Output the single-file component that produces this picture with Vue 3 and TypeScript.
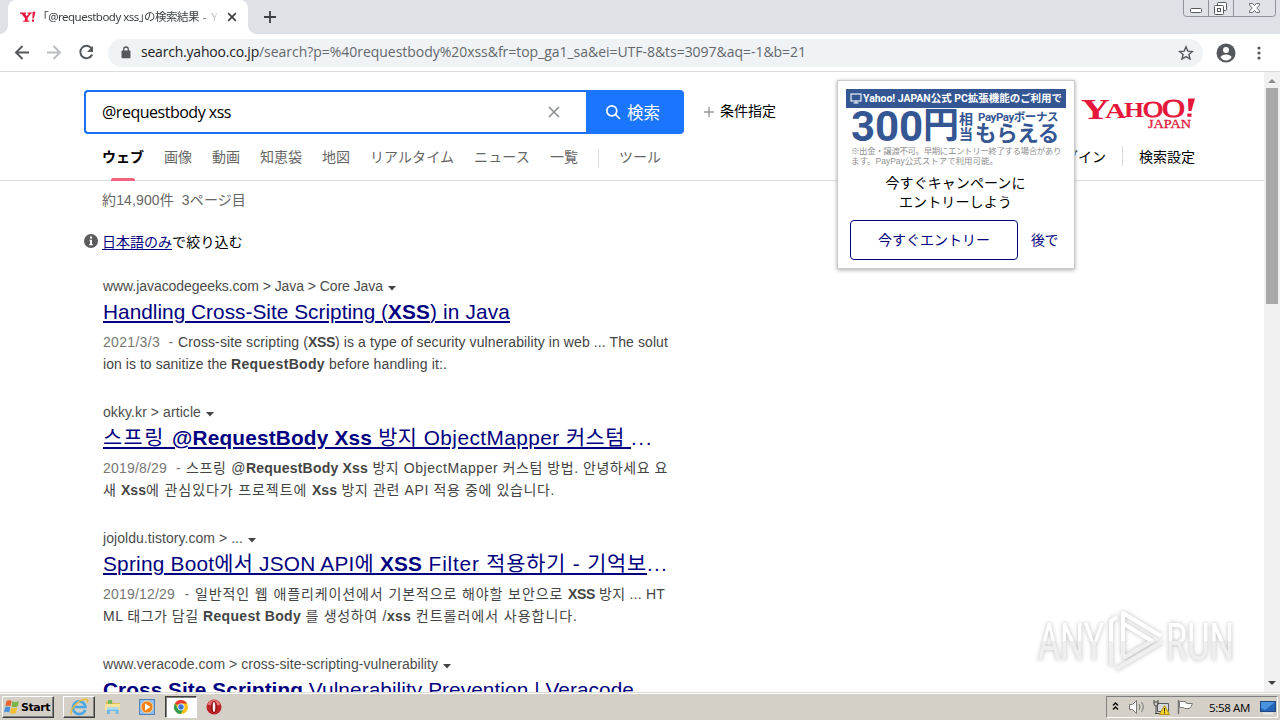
<script setup lang="ts">
import type { Directive } from 'vue'

interface Run { t: string; w: number; b?: boolean; g?: boolean }
interface Result { url: Run; title: Run[]; tail?: Run; lines: Run[][] }

// Spreads letter spacing so that a run takes exactly its designed width.
const vFit: Directive<HTMLElement, number> = {
  mounted(el, binding) {
    const count = Array.from(el.textContent ?? '').length
    const width = el.getBoundingClientRect().width
    if (count > 0) el.style.letterSpacing = `${(binding.value - width) / count}px`
  },
}

const tabs: Run[] = [
  { t: 'ウェブ', w: 42, b: true },
  { t: '画像', w: 28 },
  { t: '動画', w: 28 },
  { t: '知恵袋', w: 42 },
  { t: '地図', w: 28 },
  { t: 'リアルタイム', w: 84 },
  { t: 'ニュース', w: 56 },
  { t: '一覧', w: 28 },
]

const results: Result[] = [
  {
    url: { t: 'www.javacodegeeks.com > Java > Core Java', w: 280 },
    title: [
      { t: 'Handling Cross-Site Scripting (', w: 285 },
      { t: 'XSS', w: 42, b: true },
      { t: ') in Java', w: 80 },
    ],
    lines: [
      [
        { t: '2021/3/3', w: 57, g: true },
        { t: '  - ', w: 18, g: true },
        { t: 'Cross-site scripting (', w: 130 },
        { t: 'XSS', w: 27, b: true },
        { t: ') is a type of security vulnerability in web ... The solut', w: 333 },
      ],
      [
        { t: 'ion is to sanitize the ', w: 128 },
        { t: 'RequestBody', w: 94, b: true },
        { t: ' before handling it:.', w: 122 },
      ],
    ],
  },
  {
    url: { t: 'okky.kr > article', w: 98 },
    title: [
      { t: '스프링 ', w: 69 },
      { t: '@RequestBody Xss', w: 200, b: true },
      { t: ' 방지 ObjectMapper 커스텀 ', w: 259 },
    ],
    tail: { t: '...', w: 22 },
    lines: [
      [
        { t: '2019/8/29', w: 64, g: true },
        { t: '  - ', w: 19, g: true },
        { t: '스프링 @', w: 60 },
        { t: 'RequestBody Xss', w: 122, b: true },
        { t: ' 방지 ObjectMapper 커스텀 방법. 안녕하세요 요', w: 300 },
      ],
      [
        { t: '새 ', w: 18 },
        { t: 'Xss', w: 25, b: true },
        { t: '에 관심있다가 프로젝트에 ', w: 166 },
        { t: 'Xss', w: 25, b: true },
        { t: ' 방지 관련 API 적용 중에 있습니다.', w: 218 },
      ],
    ],
  },
  {
    url: { t: 'jojoldu.tistory.com > ...', w: 140 },
    title: [
      { t: 'Spring Boot에서 JSON API에 ', w: 277 },
      { t: 'XSS', w: 42, b: true },
      { t: ' Filter 적용하기 - 기억보', w: 225 },
    ],
    tail: { t: '...', w: 21 },
    lines: [
      [
        { t: '2019/12/29', w: 72, g: true },
        { t: '  - ', w: 20, g: true },
        { t: '일반적인 웹 애플리케이션에서 기본적으로 해야할 보안으로 ', w: 373 },
        { t: 'XSS', w: 27, b: true },
        { t: ' 방지 ... HT', w: 70 },
      ],
      [
        { t: 'ML 태그가 담길 ', w: 100 },
        { t: 'Request Body', w: 98, b: true },
        { t: ' 를 생성하여 /', w: 86 },
        { t: 'xss', w: 24, b: true },
        { t: ' 컨트롤러에서 사용합니다.', w: 167 },
      ],
    ],
  },
  {
    url: { t: 'www.veracode.com > cross-site-scripting-vulnerability', w: 335 },
    title: [
      { t: 'Cross Site Scripting', w: 200, b: true },
      { t: ' Vulnerability Prevention | Veracode', w: 331 },
    ],
    lines: [],
  },
]
</script>

<template>
  <div class="screen">
    <div class="tabstrip">
      <div class="tab">
        <svg class="fav" width="16" height="12" viewBox="0 0 16 12">
          <path d="M0 1.5h6v1.2H5l1.8 2.6 2-2.6H7.6V1.5h4.2v1.2h-1L7.6 7v2.5h1.6v1.2H3.3V9.5H5V7.2L1.4 2.7H0z" fill="#e5173f" />
          <path d="M12.6.8h2.9l-1.7 6.6h-1.4zM12 8.6h2v2.1h-2z" fill="#e5173f" />
        </svg>
        <div class="tabtitle"><span v-fit="156">「@requestbody xss」の検索結果</span><span v-fit="19"> - Y</span><span>a</span></div>
        <svg class="tabx" width="10" height="10" viewBox="0 0 10 10"><path d="M1.2 1.2l7.6 7.6M8.8 1.2L1.2 8.8" stroke="#3c4043" stroke-width="1.7" /></svg>
      </div>
      <svg class="newtab" width="12" height="12" viewBox="0 0 12 12"><path d="M6 0v12M0 6h12" stroke="#3c4043" stroke-width="1.8" /></svg>
      <svg class="winctl" width="96" height="18" viewBox="0 0 96 18" fill="none">
        <path d="M1.5 0v13.5q0 3 3 3h86q3 0 3-3V0" stroke="#8f949b" />
        <path d="M26.5 0v16M51.5 0v16" stroke="#8f949b" />
        <rect x="8.5" y="8.5" width="11" height="4" rx="1" stroke="#55595f" fill="#fff" />
        <rect x="35.500" y="2.500" width="9" height="8" rx="1" stroke="#55595f" fill="#fff" />
        <rect x="32.500" y="5.500" width="9" height="9" rx="1" stroke="#55595f" fill="#fff" />
        <rect x="35.500" y="8.500" width="3" height="3" stroke="#55595f" />
        <path d="M67.500 3.500h3.200l1.800 2 1.800-2h3.200v1.500l-2.700 3 2.700 3v1.500h-3.200l-1.800-2-1.800 2h-3.200V11l2.700-3-2.700-3z" stroke="#6a6e74" fill="#fff" />
      </svg>
    </div>

    <div class="toolbar">
      <svg class="nav" width="100" height="36" viewBox="0 0 100 36" fill="none" stroke-width="1.900">
        <path d="M21 17.500H8M14.500 11L8 17.500l6.500 6.500" stroke="#54585c" />
        <path d="M39 17.500h13M45.500 11l6.500 6.500-6.500 6.500" stroke="#b9bbbe" />
        <path d="M83.600 13.400A6.200 6.200 0 1 0 84.200 19.500" stroke="#54585c" />
        <path d="M85 11v6h-6z" fill="#54585c" />
      </svg>
      <div class="omnibox">
        <svg class="lock" width="10" height="13" viewBox="0 0 10 13"><rect x="0.500" y="4.500" width="9" height="7.800" rx="1" fill="#54585c" /><path d="M2.700 5V3.300a2.300 2.300 0 0 1 4.600 0V5" fill="none" stroke="#54585c" stroke-width="1.300" /></svg>
        <div class="address"><span v-fit="118" class="host">search.yahoo.co.jp</span><span v-fit="547">/search?p=%40requestbody%20xss&amp;fr=top_ga1_sa&amp;ei=UTF-8&amp;ts=3097&amp;aq=-1&amp;b=21</span></div>
        <svg class="star" width="16" height="16" viewBox="0 0 16 16"><path d="M8 1.800l1.800 4.300 4.600.4-3.500 3 1.100 4.500L8 11.600 4 14l1.100-4.500-3.500-3 4.600-.4z" fill="none" stroke="#54585c" stroke-width="1.400" /></svg>
      </div>
      <svg class="avatar" width="20" height="20" viewBox="0 0 20 20"><circle cx="10" cy="10" r="9.500" fill="#54585c" /><circle cx="10" cy="7" r="3" fill="#fff" /><path d="M4.500 14.500c0-2 3.500-3 5.500-3s5.500 1 5.500 3C14 16.600 12.200 17.500 10 17.500S6 16.600 4.500 14.500z" fill="#fff" /></svg>
      <svg class="dots" width="4" height="14" viewBox="0 0 4 14" fill="#54585c"><circle cx="2" cy="2" r="1.600" /><circle cx="2" cy="7" r="1.600" /><circle cx="2" cy="12" r="1.600" /></svg>
    </div>

    <div class="viewport">
      <div class="page">
        <header class="header">
          <div class="left">
            <div class="searchrow">
              <div class="field"><span v-fit="129">@requestbody xss</span>
                <svg width="12" height="12" viewBox="0 0 12 12"><path d="M1 1l10 10M11 1L1 11" stroke="#8d9196" stroke-width="1.700" /></svg>
              </div>
              <div class="go">
                <svg width="16" height="16" viewBox="0 0 16 16" fill="none" stroke="#fff" stroke-width="1.700"><circle cx="6.800" cy="6.800" r="5" /><path d="M10.500 10.500L15 15" /></svg>
                <span v-fit="33">検索</span>
              </div>
              <svg class="plus" width="10" height="10" viewBox="0 0 10 10"><path d="M5 0v10M0 5h10" stroke="#999" stroke-width="1.400" /></svg>
              <span v-fit="56" class="cond">条件指定</span>
            </div>
            <nav class="tabs">
              <div v-for="item in tabs" :key="item.t" class="navitem" :class="{ on: item.b }"><span v-fit="item.w">{{ item.t }}</span></div>
              <i class="bar"></i>
              <div class="navitem tool"><span v-fit="42">ツール</span></div>
            </nav>
          </div>
          <div class="right">
            <svg class="logo" width="116" height="34" viewBox="0 0 116 34" fill="#e6173b" font-family="'Liberation Serif', serif" font-weight="bold">
              <text x="0" y="22" font-size="29" textLength="29" lengthAdjust="spacingAndGlyphs">Y</text>
              <text x="24" y="21" font-size="22" textLength="21" lengthAdjust="spacingAndGlyphs">A</text>
              <text x="43" y="20" font-size="22" textLength="20" lengthAdjust="spacingAndGlyphs">H</text>
              <text x="62" y="20" font-size="23" textLength="20" lengthAdjust="spacingAndGlyphs" font-weight="normal" stroke="#e6173b" stroke-width=".9">O</text>
              <text x="81" y="20" font-size="25" textLength="23" lengthAdjust="spacingAndGlyphs" font-weight="normal" stroke="#e6173b" stroke-width=".9">O</text>
              <path d="M107 1.500h7l-3.600 12.500h-3zM106.300 16.500h4.200v3.200h-4.200z" />
              <text x="67" y="30.500" font-size="13.500" textLength="43" lengthAdjust="spacingAndGlyphs" font-weight="normal" stroke="#e6173b" stroke-width=".3">JAPAN</text>
            </svg>
            <div class="account"><span v-fit="56">ログイン</span><i></i><span v-fit="56">検索設定</span></div>
          </div>
        </header>

        <main class="main">
          <div class="count"><span v-fit="144">約14,900件&nbsp; 3ページ目</span></div>
          <div class="refine">
            <svg width="14" height="14" viewBox="0 0 14 14"><circle cx="7" cy="7" r="7" fill="#5c5c5c" /><path d="M5.500 5.800H8v4.500h1v1H5v-1h1V6.800h-.5zM6 2.600h2v2H6z" fill="#fff" /></svg>
            <span v-fit="70" class="link">日本語のみ</span><span v-fit="71">で絞り込む</span>
          </div>
          <article v-for="r in results" :key="r.url.t" class="result">
            <div class="url"><span v-fit="r.url.w">{{ r.url.t }}</span><svg width="8" height="5" viewBox="0 0 8 5"><path d="M0 0h8L4 4.500z" fill="#444" /></svg></div>
            <div class="title"><span class="tl"><span v-for="(s, i) in r.title" :key="i" v-fit="s.w" :class="{ b: s.b }">{{ s.t }}</span></span><span v-if="r.tail" v-fit="r.tail.w">{{ r.tail.t }}</span></div>
            <div class="snippet">
              <div v-for="(line, j) in r.lines" :key="j"><span v-for="(s, i) in line" :key="i" v-fit="s.w" :class="{ b: s.b, g: s.g }">{{ s.t }}</span></div>
            </div>
          </article>
        </main>
      </div>

      <div class="scroll">
        <svg width="8" height="4" viewBox="0 0 8 4"><path d="M4 0l4 4H0z" fill="#8d8d8d" /></svg>
        <div class="thumb"></div>
        <svg class="down" width="8" height="4" viewBox="0 0 8 4"><path d="M0 0h8L4 4z" fill="#404040" /></svg>
      </div>
    </div>

    <div class="taskbar">
      <div class="start">
        <svg width="16" height="16" viewBox="0 0 16 16">
          <path d="M2.500 2q2.500-1.500 5.200 0L6.500 7.300q-2.500-1.400-5 0z" fill="#e8642c" />
          <path d="M8.500 2.300q2.800 1.500 6.500 0L13.500 7.600q-3.200 1.400-6 0z" fill="#79b547" />
          <path d="M1.200 8.300q2.500-1.400 5.200 0L5.200 13.500q-2.500-1.400-5.200 0z" fill="#4a91dc" />
          <path d="M7.200 8.600q2.800 1.500 6 0L12 14q-3.200 1.400-6 0z" fill="#f3bf32" />
        </svg>
        <span v-fit="29">Start</span>
      </div>
      <div class="task ie">
        <svg width="20" height="20" viewBox="0 0 20 20" fill="none"><path d="M16.200 12.800A6.300 6.300 0 1 1 16.500 10H5" stroke="#4aa9e2" stroke-width="2.600" /><path d="M2.500 17.500C-1 15 9 1.500 17.500 2.200q2 .5.700 3.600" stroke="#e9b93c" stroke-width="1.500" /></svg>
      </div>
      <svg class="folder" width="18" height="18" viewBox="0 0 18 18"><path d="M2 3h6l1 2h7v6H2z" fill="#e5bd55" /><path d="M4 2h4v4H4z" fill="#76b75b" /><path d="M1 6h15v6H1z" fill="#f7e39a" /><path d="M3 16V9.500h11.500V16h-3v-3h-5.500v3z" fill="#72b9e5" /><path d="M3 9.500h11.500v2H3z" fill="#b4dff5" /></svg>
      <svg class="wmp" width="18" height="18" viewBox="0 0 18 18"><rect x="1.500" y="1.500" width="15" height="15" fill="#8fc0eb" stroke="#4983bd" /><circle cx="9" cy="9" r="6" fill="#f28318" stroke="#fbd19c" /><path d="M7 5.500l5.500 3.500L7 12.500z" fill="#fff" /></svg>
      <div class="task chrome">
        <svg width="16" height="16" viewBox="0 0 16 16"><circle cx="8" cy="8" r="7" fill="#fbc116" /><path d="M8 8L1.900 4.500A7 7 0 0 1 14.100 4.500H8z" fill="#e53a30" /><path d="M1.900 4.500A7 7 0 0 0 7.600 15L11 9.700 8 8 5 9.700z" fill="#2c9d4e" /><circle cx="8" cy="8" r="3.500" fill="#fff" /><circle cx="8" cy="8" r="2.700" fill="#3a76dc" /></svg>
      </div>
      <svg class="opera" width="16" height="16" viewBox="0 0 16 16"><circle cx="8" cy="8" r="7.500" fill="#bd2226" /><path d="M1.500 5.500a7 7 0 0 1 13 0Q8 8 1.500 5.500z" fill="#e37470" /><ellipse cx="8" cy="8" rx="3.100" ry="6" fill="#941015" /><ellipse cx="8" cy="8" rx="1.300" ry="5" fill="#f8f2f2" /></svg>
      <div class="tray">
        <svg width="94" height="20" viewBox="0 0 94 20" fill="none">
          <path d="M6 8.500l2.500-2.500 2.500 2.500M6 12.500l2.500-2.500 2.500 2.500" stroke="#111" stroke-width="1.500" />
          <g stroke="#777"><path d="M22.500 7.500h3l4-4v13l-4-4h-3z" fill="#fff" /><path d="M32 7q2 3 0 6M34.500 5q3.500 5 0 10" /></g>
          <path d="M50.500 6.500h11v8h-11z" fill="#d4d8dd" stroke="#55595e" /><path d="M47 3v4q0 2 2 2v7M47 5h4M51 3v4q0 2-2 2" stroke="#484848" /><path d="M48 16.500h6" stroke="#484848" />
          <path d="M57.500 8.500l5 9h-10z" fill="#f7d629" stroke="#b59314" /><path d="M57.500 11v3.500M57.500 15.200v1.300" stroke="#222" />
          <path d="M71.500 3v14" stroke="#777" stroke-width="1.500" /><path d="M72.500 4.500h6l1 2h6q-1 3-3 5h-5l-1-1h-4z" fill="#fff" stroke="#777" />
        </svg>
        <span v-fit="41" class="time">5:58 AM</span>
        <svg class="desk" width="16" height="15" viewBox="0 0 16 15"><rect x=".5" y="1.500" width="15" height="10" fill="#2564b7" stroke="#1d477e" /><path d="M1 2h14L5 10 1 8z" fill="#4c93df" /><path d="M3 13.500h10" stroke="#e8e8e8" stroke-width="2" /></svg>
      </div>
    </div>

    <aside class="popup">
      <div class="banner">
        <svg width="12" height="11" viewBox="0 0 12 11" fill="none" stroke="#fff" stroke-width="1.100"><rect x="1" y="1" width="10" height="7" /><path d="M6 8v2M3.500 10h5" /></svg>
        <span v-fit="199">Yahoo! JAPAN公式 PC拡張機能のご利用で</span>
      </div>
      <div class="offer">
        <span v-fit="72" class="big">300</span><span v-fit="34" class="yen">円</span>
        <span class="stack"><b>相</b><b>当</b></span>
        <span class="gain"><b v-fit="80" class="pp">PayPayボーナス</b><b v-fit="84" class="get">もらえる</b></span>
      </div>
      <div class="note"><div><span v-fit="210">※出金・譲渡不可。早期にエントリー終了する場合があり</span></div><div><span v-fit="147">ます。PayPay公式ストアで利用可能。</span></div></div>
      <div class="msg"><div><span v-fit="140">今すぐキャンペーンに</span></div><div><span v-fit="113">エントリーしよう</span></div></div>
      <div class="actions"><div class="entry"><span v-fit="112">今すぐエントリー</span></div><span v-fit="27" class="later">後で</span></div>
    </aside>

    <svg class="mark" width="210" height="76" viewBox="0 0 210 76">
      <defs>
        <linearGradient id="fade" x1="0" y1="0" x2="0" y2="76" gradientUnits="userSpaceOnUse"><stop offset=".51" stop-color="#fff" /><stop offset=".52" stop-color="#efefef" /></linearGradient>
      </defs>
      <g class="glow" fill="url(#fade)" font-family="Roboto, sans-serif" font-size="52">
        <text x="8" y="58" textLength="66" lengthAdjust="spacingAndGlyphs">ANY</text>
        <text x="136" y="58" textLength="68" lengthAdjust="spacingAndGlyphs">RUN</text>
        <g fill="none" stroke="url(#fade)" stroke-width="4" stroke-linejoin="round"><path d="M93 54V11l38 23" /><path d="M81 64V19l6-4" /><path d="M94 22l28 17-29 17" /><path d="M86 67l46-27" /></g>
      </g>
    </svg>
  </div>
</template>

<style>
body { margin: 0; overflow: hidden; }
</style>

<style scoped>
.screen { position: relative; width: 1280px; height: 720px; overflow: hidden; display: flex; flex-direction: column; background: #fff; font-family: "Liberation Sans", "Noto Sans CJK JP", "Noto Sans CJK KR", sans-serif; font-size: 14px; color: #000; white-space: pre; }
svg { display: block; flex: none; }
.b, b { font-weight: bold; }
.tabstrip { height: 34px; flex: none; background: #dee1e6; display: flex; align-items: flex-start; padding-left: 8px; }
.tab { width: 240px; height: 34px; box-sizing: border-box; background: #fff; border-radius: 8px 8px 0 0; display: flex; align-items: center; padding-left: 12px; position: relative; }
.tab::before, .tab::after { content: ""; position: absolute; bottom: 0; width: 8px; height: 8px; }
.tab::before { left: -8px; background: radial-gradient(circle at 0 0, transparent 7.500px, #fff 8px); }
.tab::after { right: -8px; background: radial-gradient(circle at 100% 0, transparent 7.500px, #fff 8px); }
.fav { width: 16px; }
.tabtitle { margin-left: 7px; width: 175px; overflow: hidden; font-family: "Noto Sans", "Noto Sans CJK JP", sans-serif; font-feature-settings: "halt"; font-size: 11.500px; line-height: 20px; color: #3c4043; -webkit-mask-image: linear-gradient(90deg, #000 155px, transparent 178px); mask-image: linear-gradient(90deg, #000 155px, transparent 178px); }
.tabx { margin-left: 9px; }
.newtab { margin: 11px 0 0 16px; }
.winctl { margin-left: auto; margin-right: 2px; }
.toolbar { height: 37px; flex: none; border-bottom: 1px solid #d9dbde; display: flex; align-items: center; background: #fff; }
.nav { margin-left: 8px; margin-right: 0; }
.omnibox { width: 1095px; height: 28px; border-radius: 14px; background: #f0f3f6; display: flex; align-items: center; box-sizing: border-box; padding-left: 13px; }
.address { margin-left: 10px; font-family: "Open Sans", "Noto Sans", sans-serif; font-size: 14px; line-height: 24px; color: #64686d; position: relative; top: -1px; }
.host { color: #202124; }
.star { margin-left: auto; margin-right: 9px; }
.avatar { margin-left: 13px; }
.dots { margin-left: 21px; }
.viewport { height: 620px; flex: none; display: flex; overflow: hidden; }
.page { width: 1264px; height: 620px; overflow: hidden; }
.header { height: 108px; border-bottom: 1px solid #dcdee0; display: flex; justify-content: space-between; }
.left { padding: 18px 0 0 84px; }
.searchrow { display: flex; align-items: center; height: 44px; }
.field { width: 502px; height: 44px; box-sizing: border-box; border: 2px solid #1b70ee; border-right: 0; border-radius: 4px 0 0 4px; display: flex; align-items: center; justify-content: space-between; padding: 0 26px 0 16px; font-family: "Open Sans", "Noto Sans", sans-serif; font-size: 16px; }
.go { width: 98px; height: 44px; box-sizing: border-box; border-radius: 0 4px 4px 0; background: #1a75ff; color: #fff; display: flex; align-items: center; padding-left: 19px; font-size: 16.500px; }
.go span { margin-left: 6px; }
.plus { margin: 0 6px 0 20px; }
.cond { line-height: 20px; position: relative; top: -1px; }
.tabs { display: flex; height: 46px; padding-left: 18px; }
.navitem { position: relative; line-height: 46px; height: 46px; margin-right: 20px; color: #666; }
.navitem.on { color: #000; font-weight: bold; }
.navitem.on::after { content: ""; position: absolute; left: 9px; bottom: -1px; width: 24px; height: 3px; border-radius: 2px 2px 0 0; background: #f4647f; }
.bar { width: 1px; height: 18px; background: #d9dbde; margin: 16px 20px 0 0; }
.right { width: 214px; margin-right: 0; }
.logo { margin: 25px 0 0 31px; }
.account { display: flex; align-items: center; height: 20px; margin-top: 15px; }
.account i { width: 1px; height: 20px; background: #ddd; margin: 0 16px; }
.main { padding-left: 84px; }
.count { height: 22px; line-height: 22px; padding: 8px 0 0 18px; color: #666; }
.refine { display: flex; align-items: center; height: 22px; margin: 19px 0 23px; }
.refine .link { margin-left: 4px; color: #000080; text-decoration: underline; text-underline-offset: 2px; }
.result { padding-left: 19px; margin-bottom: 26px; }
.url { display: flex; align-items: center; height: 22px; line-height: 22px; color: #4c4c4c; }
.url svg { margin: 4px 0 0 5px; }
.title { height: 30px; line-height: 30px; font-size: 20.800px; color: #000080; }
.tl { text-decoration: underline; text-decoration-thickness: 2px; text-underline-offset: 2px; }
.snippet { padding-top: 4px; line-height: 22px; color: #444; }
.snippet > div { height: 22px; }
.url, .title, .snippet { font-family: "Liberation Sans", "Noto Sans CJK KR", sans-serif; }
.g { color: #777; }
.scroll { width: 16px; height: 620px; background: #f1f1f1; display: flex; flex-direction: column; align-items: center; padding-top: 7px; box-sizing: border-box; }
.thumb { width: 12px; height: 216px; margin-top: 5px; background: #a8a8a8; }
.down { margin-top: auto; margin-bottom: 7px; }
.taskbar { height: 28px; flex: none; box-sizing: border-box; border-top: 1px solid #dcdad4; box-shadow: inset 0 1px #fff; background: #d4d0c8; display: flex; align-items: center; padding: 2px 0 1px 2px; }
.start { width: 52px; height: 22px; box-sizing: border-box; border: 1px solid; border-color: #fff #404040 #404040 #fff; box-shadow: inset -1px -1px #808080; display: flex; align-items: center; padding-left: 1px; font-family: "DejaVu Sans", sans-serif; font-weight: bold; font-size: 11px; }
.start span { margin-left: 1px; }
.task { width: 32px; height: 22px; box-sizing: border-box; border: 1px solid; display: flex; align-items: center; justify-content: center; }
.ie { margin-left: 9px; border-color: #fff #404040 #404040 #fff; box-shadow: inset -1px -1px #808080; }
.folder { margin-left: 9px; }
.wmp { margin-left: 16px; }
.chrome { margin-left: 9px; border-color: #404040 #fff #fff #404040; box-shadow: inset 1px 1px #808080; background: #fff; }
.opera { margin-left: 9px; }
.tray { margin-left: auto; margin-right: 2px; width: 172px; height: 22px; box-sizing: border-box; border: 1px solid; border-color: #808080 #fff #fff #808080; display: flex; align-items: center; }
.time { margin-left: 8px; font-family: "Open Sans", sans-serif; font-size: 11.500px; }
.desk { margin-left: 10px; }
.popup { position: absolute; left: 837px; top: 80px; width: 238px; height: 189px; box-sizing: border-box; background: #fff; border: 1px solid #ccc; box-shadow: 0 1px 4px rgba(0, 0, 0, .35); padding: 8px 0 0 8px; }
.banner { width: 220px; height: 19px; background: #345692; color: #fff; font-weight: bold; font-size: 10.500px; display: flex; align-items: center; padding-left: 4px; box-sizing: border-box; font-family: Roboto, "Noto Sans CJK JP", sans-serif; }
.banner span { margin-left: 1px; position: relative; top: -1px; }
.offer { height: 38px; display: flex; align-items: center; color: #345692; padding-left: 5px; font-family: Roboto, "Noto Sans CJK JP", sans-serif; }
.big { font-size: 42px; line-height: 38px; font-weight: bold; }
.yen { font-size: 36px; line-height: 38px; font-weight: bold; position: relative; top: -1px; }
.stack { display: flex; flex-direction: column; font-size: 14px; line-height: 15px; margin-left: 2px; width: 16px; }
.gain { display: flex; flex-direction: column; align-items: flex-start; }
.pp { font-size: 11.500px; line-height: 14px; margin-left: 3px; font-weight: 700; }
.get { font-size: 21.500px; line-height: 20px; }
.note { height: 20px; padding-left: 5px; font-size: 8.500px; line-height: 10px; color: #909090; }
.note div { height: 10px; }
.msg { margin: 8px 9px 0 0; text-align: center; line-height: 19px; }
.msg div { height: 19px; }
.actions { display: flex; align-items: center; color: #000080; margin-top: 8px; padding-left: 4px; }
.entry { width: 168px; height: 40px; box-sizing: border-box; border: 1px solid #000080; border-radius: 4px; display: flex; align-items: center; justify-content: center; padding-bottom: 2px; }
.later { margin-left: 13px; padding-bottom: 2px; }
.mark { position: absolute; left: 1030px; top: 602px; }
.glow { filter: drop-shadow(0 0 2px rgba(0, 0, 0, .27)); }
</style>
